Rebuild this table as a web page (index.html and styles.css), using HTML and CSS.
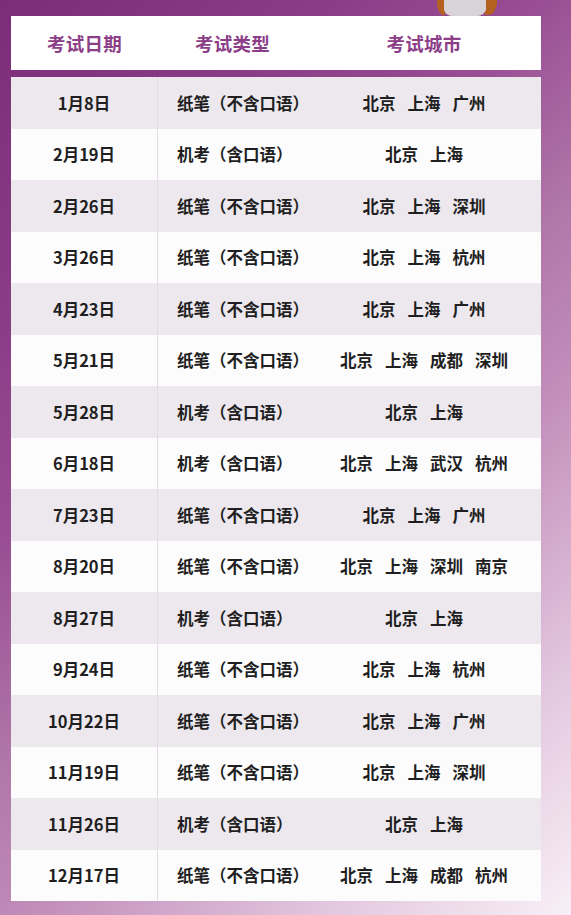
FILE: index.html
```html
<!DOCTYPE html>
<html lang="zh-CN">
<head>
<meta charset="utf-8">
<title>考试日期</title>
<link rel="stylesheet" href="styles.css">
</head>
<body>
<div class="page">
  <svg class="figure" width="60" height="16" viewBox="0 0 60 16" aria-hidden="true">
    <path d="M0 0 H60 V4 Q58 14 52 15 H48 V0 Z" fill="#b4611f"/>
    <path d="M0 0 H8 V15 H5 Q1 12 0 4 Z" fill="#b4611f"/>
    <path d="M7 0 H49 V10 Q46 16 40 16 H16 Q9 16 7 10 Z" fill="#d8d3d6"/>
  </svg>
  <div class="head">
    <div class="hcell">考试日期</div>
    <div class="hcell">考试类型</div>
    <div class="hcell">考试城市</div>
  </div>
  <div class="table">
    <div class="row"><div class="c date">1月8日</div><div class="c type">纸笔（不含口语）</div><div class="c city"><span>北京</span><span>上海</span><span>广州</span></div></div>
    <div class="row"><div class="c date">2月19日</div><div class="c type">机考（含口语）</div><div class="c city"><span>北京</span><span>上海</span></div></div>
    <div class="row"><div class="c date">2月26日</div><div class="c type">纸笔（不含口语）</div><div class="c city"><span>北京</span><span>上海</span><span>深圳</span></div></div>
    <div class="row"><div class="c date">3月26日</div><div class="c type">纸笔（不含口语）</div><div class="c city"><span>北京</span><span>上海</span><span>杭州</span></div></div>
    <div class="row"><div class="c date">4月23日</div><div class="c type">纸笔（不含口语）</div><div class="c city"><span>北京</span><span>上海</span><span>广州</span></div></div>
    <div class="row"><div class="c date">5月21日</div><div class="c type">纸笔（不含口语）</div><div class="c city"><span>北京</span><span>上海</span><span>成都</span><span>深圳</span></div></div>
    <div class="row"><div class="c date">5月28日</div><div class="c type">机考（含口语）</div><div class="c city"><span>北京</span><span>上海</span></div></div>
    <div class="row"><div class="c date">6月18日</div><div class="c type">机考（含口语）</div><div class="c city"><span>北京</span><span>上海</span><span>武汉</span><span>杭州</span></div></div>
    <div class="row"><div class="c date">7月23日</div><div class="c type">纸笔（不含口语）</div><div class="c city"><span>北京</span><span>上海</span><span>广州</span></div></div>
    <div class="row"><div class="c date">8月20日</div><div class="c type">纸笔（不含口语）</div><div class="c city"><span>北京</span><span>上海</span><span>深圳</span><span>南京</span></div></div>
    <div class="row"><div class="c date">8月27日</div><div class="c type">机考（含口语）</div><div class="c city"><span>北京</span><span>上海</span></div></div>
    <div class="row"><div class="c date">9月24日</div><div class="c type">纸笔（不含口语）</div><div class="c city"><span>北京</span><span>上海</span><span>杭州</span></div></div>
    <div class="row"><div class="c date">10月22日</div><div class="c type">纸笔（不含口语）</div><div class="c city"><span>北京</span><span>上海</span><span>广州</span></div></div>
    <div class="row"><div class="c date">11月19日</div><div class="c type">纸笔（不含口语）</div><div class="c city"><span>北京</span><span>上海</span><span>深圳</span></div></div>
    <div class="row"><div class="c date">11月26日</div><div class="c type">机考（含口语）</div><div class="c city"><span>北京</span><span>上海</span></div></div>
    <div class="row"><div class="c date">12月17日</div><div class="c type">纸笔（不含口语）</div><div class="c city"><span>北京</span><span>上海</span><span>成都</span><span>杭州</span></div></div>
  </div>
</div>
</body>
</html>
```
FILE: styles.css
```css
html, body {
  margin: 0;
  padding: 0;
}
body {
  width: 571px;
  height: 915px;
  overflow: hidden;
  font-family: "Noto Sans CJK SC", "Noto Sans", sans-serif;
  background: linear-gradient(135deg, #7b2d79 0%, #8b3c87 22%, #984c92 36%, #b077a9 52%, #c28eba 64%, #e4c9e0 84%, #f8f0f6 100%);
}
.page {
  position: relative;
  box-sizing: border-box;
  width: 571px;
  height: 915px;
  padding: 16px 30px 0 11px;
}
.figure {
  position: absolute;
  left: 437px;
  top: 0;
}
.head {
  display: grid;
  grid-template-columns: 147px 149px 234px;
  height: 54px;
  background: #ffffff;
  margin-bottom: 7px;
}
.hcell {
  display: flex;
  align-items: center;
  justify-content: center;
  font-size: 18.5px;
  font-weight: 700;
  color: #8c3f88;
  letter-spacing: 0.3px;
}
.table {
  display: flex;
  flex-direction: column;
}
.row {
  display: grid;
  grid-template-columns: 147px 149px 234px;
  height: 51.5px;
  background: #fdfcfd;
}
.row:nth-child(odd) {
  background: #ede8ee;
}
.c {
  display: flex;
  align-items: center;
  font-size: 16.5px;
  font-weight: 700;
  color: #1f1f1f;
}
.date {
  justify-content: center;
  border-right: 1px solid #e2dde3;
}
.type {
  padding-left: 19px;
}
.city {
  justify-content: center;
  gap: 12px;
}
```
